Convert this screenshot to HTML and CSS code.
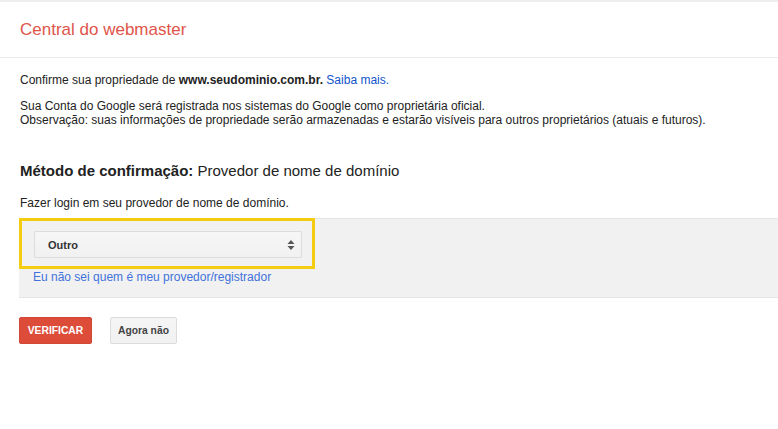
FILE: index.html
```html
<!DOCTYPE html>
<html lang="pt-BR">
<head>
  <meta charset="UTF-8">
  <title>Central do webmaster</title>
  <link rel="stylesheet" href="styles.css">
</head>
<body>
  <div class="TopBar"></div>

  <header class="Header">
    <h1 class="Header_Title">Central do webmaster</h1>
  </header>

  <main class="Content">
    <p class="Text">Confirme sua propriedade de <b>www.seudominio.com.br.</b> <a href="#">Saiba mais.</a></p>

    <p class="Text">
      Sua Conta do Google será registrada nos sistemas do Google como proprietária oficial.<br>
      Observação: suas informações de propriedade serão armazenadas e estarão visíveis para outros proprietários (atuais e futuros).
    </p>

    <h2 class="Method"><b>Método de confirmação:</b> Provedor de nome de domínio</h2>

    <p class="Text -last">Fazer login em seu provedor de nome de domínio.</p>

    <div class="Panel">
      <div class="Highlight">
        <div class="Select">
          <span>Outro</span>
          <svg class="Select_Arrows" width="8" height="12" viewBox="0 0 8 12">
            <path d="M4 1 L7.5 5 H0.5 Z" fill="#555"/>
            <path d="M4 11 L7.5 7 H0.5 Z" fill="#555"/>
          </svg>
        </div>
      </div>
      <a class="Panel_Link" href="#">Eu não sei quem é meu provedor/registrador</a>
    </div>

    <div class="Actions">
      <button class="Button -primary">VERIFICAR</button>
      <button class="Button">Agora não</button>
    </div>
  </main>
</body>
</html>
```

FILE: styles.css
```css
body {
  margin: 0;
  font-family: "Liberation Sans", Arial, sans-serif;
  color: #222;
  background-color: #fff;
}

a {
  color: #1155cc;
  text-decoration: none;
}

.TopBar {
  height: 2px;
  background-color: #eee;
}

.Header {
  height: 55px;
  border-bottom: 1px solid #ebebeb;
  display: flex;
  align-items: center;
  padding-left: 20px;
}

.Header_Title {
  margin: 0;
  font-size: 17px;
  font-weight: normal;
  color: #e0554a;
}

.Content {
  padding: 15px 0 0 20px;
}

.Text {
  margin: 0 0 12px;
  font-size: 12px;
  line-height: 14px;
}

.Text.-last {
  margin-bottom: 0;
}

.Text b {
  color: #222;
}

.Method {
  margin: 35px 0 16px;
  font-size: 15px;
  font-weight: normal;
  line-height: 18px;
  color: #222;
}

.Panel {
  margin-top: 8px;
  margin-left: -1px;
  height: 78px;
  background-color: #f1f1f1;
  border-top: 1px solid #e5e5e5;
  border-bottom: 1px solid #e5e5e5;
}

.Highlight {
  box-sizing: border-box;
  width: 296px;
  height: 51px;
  margin-top: -1px;
  border: 3px solid #f4cd13;
  padding: 10px 0 0 12px;
}

.Select {
  width: 268px;
  height: 27px;
  box-sizing: border-box;
  display: flex;
  align-items: center;
  justify-content: space-between;
  padding: 0 6px 0 13px;
  border: 1px solid #dcdcdc;
  border-radius: 2px;
  background: linear-gradient(#f6f6f6, #f1f1f1);
  font-size: 11px;
  font-weight: bold;
  color: #333;
}

.Panel_Link {
  display: block;
  margin: 1px 0 0 14px;
  font-size: 12px;
  line-height: 14px;
  color: #4272db;
}

.Actions {
  display: flex;
  gap: 18px;
  margin: 19px 0 0 -1px;
}

.Button {
  height: 27px;
  padding: 0 7px;
  border: 1px solid #dcdcdc;
  border-radius: 2px;
  background: linear-gradient(#f5f5f5, #f1f1f1);
  font-family: "Liberation Sans", Arial, sans-serif;
  font-size: 10.3px;
  font-weight: bold;
  color: #444;
}

.Button.-primary {
  width: 73px;
  border-color: #d14836;
  background: #dd4b39;
  color: #fff;
}
```
